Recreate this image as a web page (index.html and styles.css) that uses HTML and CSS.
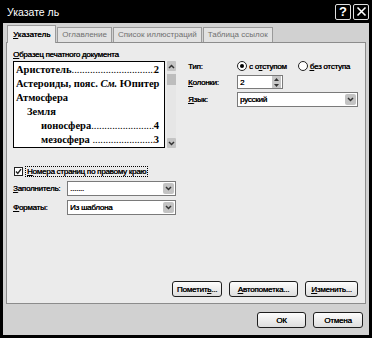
FILE: index.html
```html
<!DOCTYPE html>
<html>
<head>
<meta charset="utf-8">
<title>Указатель</title>
<link rel="stylesheet" href="styles.css">
</head>
<body>
<div class="window">
    <div class="titlebar">
        <span class="title">Указате ль</span>
        <div class="caption-btns">
            <span class="cbtn">?</span>
            <span class="cbtn">
                <svg width="11" height="11" viewBox="0 0 11 11"><path d="M1.5 1.5 L9.5 9.5 M9.5 1.5 L1.5 9.5" stroke="#fff" stroke-width="1.6"/></svg>
            </span>
        </div>
    </div>
    <div class="body">
        <div class="tabs">
            <div class="tab active"><u>У</u>казатель</div>
            <div class="tab">Оглавление</div>
            <div class="tab">Список иллюстраций</div>
            <div class="tab">Таблица ссылок</div>
        </div>
        <div class="panel">
            <div class="top">
                <div class="sample">
                    <div class="label"><u>О</u>бразец печатного документа</div>
                    <div class="preview-wrap">
                        <div class="preview">
                            <div class="entry"><span>Аристотель</span><span class="leader"></span><span>2</span></div>
                            <div class="entry"><span>Астероиды, пояс. <i>См.</i> Юпитер</span></div>
                            <div class="entry"><span>Атмосфера</span></div>
                            <div class="entry lvl2"><span>Земля</span></div>
                            <div class="entry lvl3"><span>ионосфера</span><span class="leader"></span><span>4</span></div>
                            <div class="entry lvl3"><span>мезосфера&nbsp;</span><span class="leader"></span><span>3</span></div>
                        </div>
                        <div class="scroll">
                            <div class="sbtn"><svg width="7" height="5" viewBox="0 0 7 5"><path d="M1 4 L3.5 1.5 L6 4" stroke="#333" stroke-width="1.5" fill="none"/></svg></div>
                            <div class="thumb"></div>
                            <div class="track"></div>
                            <div class="sbtn"><svg width="7" height="5" viewBox="0 0 7 5"><path d="M1 1 L3.5 3.5 L6 1" stroke="#333" stroke-width="1.5" fill="none"/></svg></div>
                        </div>
                    </div>
                </div>
                <div class="options">
                    <span class="opt-label">Тип:</span>
                    <div class="radios">
                        <span class="radio on"></span><span>с о<u>т</u>ступом</span>
                        <span class="radio second"></span><span><u>б</u>ез отступа</span>
                    </div>
                    <span class="opt-label"><u>К</u>олонки:</span>
                    <div class="spin">
                        <span class="spin-val">2</span>
                        <span class="spin-btns">
                            <svg width="5" height="3" viewBox="0 0 5 3"><path d="M0 3 L2.5 0 L5 3Z" fill="#333"/></svg>
                            <svg width="5" height="3" viewBox="0 0 5 3"><path d="M0 0 L2.5 3 L5 0Z" fill="#333"/></svg>
                        </span>
                    </div>
                    <span class="opt-label"><u>Я</u>зык:</span>
                    <div class="select wide">
                        <span class="select-val">русский</span>
                        <span class="drop"><svg width="7" height="5" viewBox="0 0 7 5"><path d="M1 1 L3.5 3.5 L6 1" stroke="#333" stroke-width="1.5" fill="none"/></svg></span>
                    </div>
                </div>
            </div>
            <div class="check-row">
                <span class="checkbox">
                    <svg width="7" height="7" viewBox="0 0 7 7"><path d="M1 3.5 L2.8 5.5 L6 1.2" stroke="#222" stroke-width="1.4" fill="none"/></svg>
                </span>
                <span class="focus"><u>Н</u>омера страниц по правому краю</span>
            </div>
            <div class="field-row">
                <span class="field-label"><u>З</u>аполнитель:</span>
                <div class="select">
                    <span class="select-val">.......</span>
                    <span class="drop"><svg width="7" height="5" viewBox="0 0 7 5"><path d="M1 1 L3.5 3.5 L6 1" stroke="#333" stroke-width="1.5" fill="none"/></svg></span>
                </div>
            </div>
            <div class="field-row">
                <span class="field-label"><u>Ф</u>орматы:</span>
                <div class="select">
                    <span class="select-val">Из шаблона</span>
                    <span class="drop"><svg width="7" height="5" viewBox="0 0 7 5"><path d="M1 1 L3.5 3.5 L6 1" stroke="#333" stroke-width="1.5" fill="none"/></svg></span>
                </div>
            </div>
            <div class="panel-btns">
                <button class="btn w50">Пометит<u>ь</u>...</button>
                <button class="btn w69"><u>А</u>втопометка...</button>
                <button class="btn w53"><u>И</u>зменить...</button>
            </div>
        </div>
        <div class="footer">
            <button class="btn w49">ОК</button>
            <button class="btn w50">Отмена</button>
        </div>
    </div>
</div>
</body>
</html>
```

FILE: styles.css
```css
body {
    margin: 0;
    background: #fff;
    font-family: "Liberation Sans", Arial, sans-serif;
    font-size: 8px;
    color: #000;
}

.window {
    width: 372px;
    height: 338px;
    box-sizing: border-box;
    background: #000;
    padding: 0 3px 3px 3px;
    display: flex;
    flex-direction: column;
}

/* title bar */
.titlebar {
    height: 23px;
    display: flex;
    align-items: center;
    justify-content: space-between;
    color: #fff;
    padding-left: 4px;
}
.title {
    font-size: 10.5px;
}
.caption-btns {
    display: flex;
    gap: 2px;
}
.cbtn {
    width: 14px;
    height: 14px;
    border: 1px solid #e0e0e0;
    border-radius: 2px;
    display: flex;
    align-items: center;
    justify-content: center;
    font-size: 13px;
    font-weight: bold;
    color: #fff;
}

.body {
    flex: 1;
    background: #d1d1d1;
    display: flex;
    flex-direction: column;
    padding: 4px 3px 7px 3px;
}

/* tabs */
.tabs {
    display: flex;
    align-items: flex-end;
    height: 15px;
    padding-left: 1px;
    position: relative;
    z-index: 1;
}
.tab {
    height: 15px;
    box-sizing: border-box;
    padding: 0 4px;
    margin-right: 1px;
    border: 1px solid #9a9a9a;
    border-bottom: none;
    background: #e2e2e2;
    color: #707070;
    line-height: 14px;
}
.tab.active {
    height: 18px;
    padding: 0 5px;
    margin-bottom: -1px;
    background: #ebebeb;
    color: #000;
    line-height: 17px;
    text-shadow: 0.3px 0 0 #000;
}

.panel {
    height: 262px;
    box-sizing: border-box;
    border: 1px solid #8c8c8c;
    background: #ebebeb;
    padding: 7px 7px 6px 6px;
    display: flex;
    flex-direction: column;
    text-shadow: 0.3px 0 0 #000;
    letter-spacing: -0.25px;
}

.top {
    display: flex;
}
.sample {
    width: 163px;
}
.label {
    height: 11px;
    line-height: 10px;
}

.preview-wrap {
    display: flex;
    height: 87px;
}
.preview {
    flex: 1;
    border: 1px solid #000;
    background: #fff;
    padding: 1px 5px 0 2px;
    font-family: "Liberation Serif", "Times New Roman", serif;
    font-weight: bold;
    font-size: 10.5px;
    letter-spacing: 0;
    overflow: hidden;
    text-shadow: none;
}
.entry {
    display: flex;
    height: 14px;
    line-height: 14px;
    white-space: nowrap;
}
.entry i {
    font-style: italic;
}
.lvl2 { padding-left: 11px; }
.lvl3 { padding-left: 25px; }
.leader {
    flex: 1;
    overflow: hidden;
    font-weight: normal;
}
.leader::before {
    content: "....................................................................................";
}

.scroll {
    width: 9px;
    margin-left: 2px;
    display: flex;
    flex-direction: column;
    background: #e6e6e6;
}
.sbtn {
    height: 10px;
    background: #c4c4c4;
    border-radius: 1px;
    display: flex;
    align-items: center;
    justify-content: center;
}
.thumb {
    height: 11px;
    margin-top: 3px;
    background: #bdbdbd;
}
.track {
    flex: 1;
}

/* right options */
.options {
    margin-left: 12px;
    margin-top: 10px;
    display: grid;
    grid-template-columns: 49px auto;
    grid-template-rows: 12px 14px 15px;
    row-gap: 3px;
    align-items: center;
}
.radios {
    display: flex;
    align-items: center;
    white-space: nowrap;
}
.radio {
    width: 8px;
    height: 8px;
    border: 1px solid #222;
    border-radius: 50%;
    background: #fff;
    margin-right: 2px;
    display: flex;
    align-items: center;
    justify-content: center;
}
.radio.on::after {
    content: "";
    width: 4px;
    height: 4px;
    border-radius: 50%;
    background: #000;
}
.radio.second {
    margin-left: 11px;
}
.spin {
    width: 46px;
    height: 14px;
    box-sizing: border-box;
    border: 1px solid #7a7a7a;
    background: #fff;
    display: flex;
    align-items: center;
}
.spin-val {
    flex: 1;
    padding-left: 2px;
}
.spin-btns {
    width: 9px;
    height: 12px;
    margin-right: 1px;
    background: #c6c6c6;
    display: flex;
    flex-direction: column;
    align-items: center;
    justify-content: space-around;
}

.select {
    width: 109px;
    height: 15px;
    box-sizing: border-box;
    border: 1px solid #7a7a7a;
    background: #fff;
    display: flex;
    align-items: center;
}
.select.wide {
    width: 121px;
}
.select-val {
    flex: 1;
    padding-left: 2px;
}
.drop {
    width: 11px;
    height: 11px;
    margin-right: 1px;
    border-radius: 2px;
    background: #c3c3c3;
    display: flex;
    align-items: center;
    justify-content: center;
}

.check-row {
    margin-top: 18px;
    display: flex;
    align-items: center;
    height: 11px;
}
.checkbox {
    width: 9px;
    height: 9px;
    box-sizing: border-box;
    border: 1px solid #222;
    background: #fff;
    margin-left: 1px;
    margin-right: 2px;
    display: flex;
    align-items: center;
    justify-content: center;
}
.focus {
    border: 1px dotted #000;
    padding: 0 1px;
    line-height: 9px;
}

.field-row {
    margin-top: 4px;
    display: flex;
    align-items: center;
}
.field-label {
    width: 54px;
}

.panel-btns {
    margin-top: auto;
    display: flex;
    justify-content: flex-end;
    gap: 7px;
}

.btn {
    height: 16px;
    box-sizing: border-box;
    border: 1px solid #1e1e1e;
    border-radius: 3px;
    background: linear-gradient(#fdfdfd, #dedede);
    font-family: "Liberation Sans", Arial, sans-serif;
    font-size: 8px;
    letter-spacing: -0.2px;
    color: #000;
    padding: 0;
    text-shadow: 0.3px 0 0 #000;
}
.w49 { width: 49px; }
.w50 { width: 50px; }
.w53 { width: 53px; }
.w69 { width: 69px; }

.footer {
    margin-top: 8px;
    display: flex;
    justify-content: flex-end;
    gap: 7px;
    padding-right: 3px;
}
```
